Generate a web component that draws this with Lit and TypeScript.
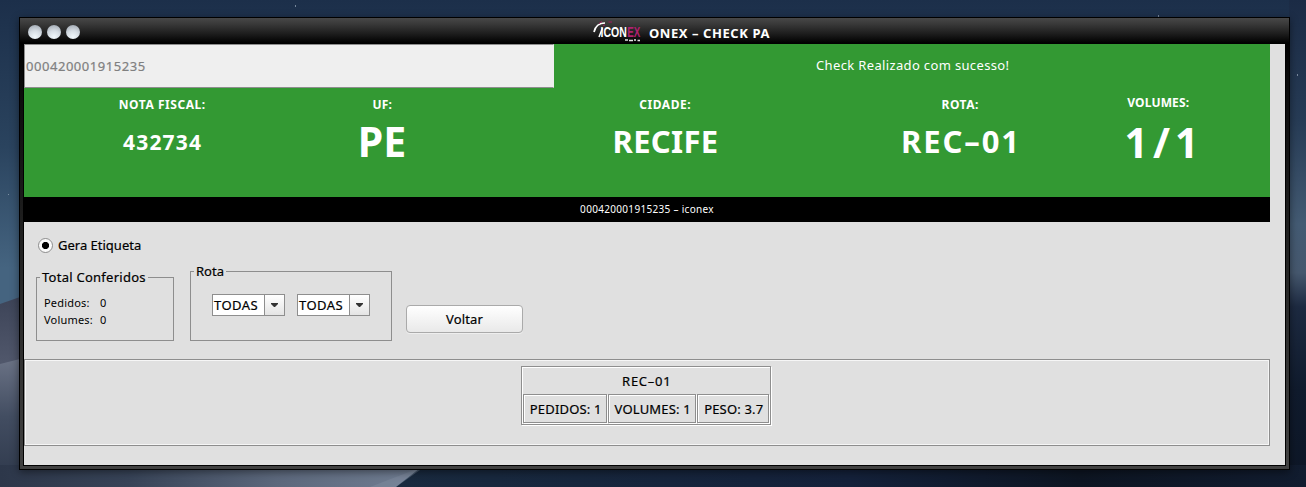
import { LitElement, html, css } from "lit";
import { customElement, property } from "lit/decorators.js";

@customElement("route-combo")
class RouteCombo extends LitElement {
  @property() value = "";
  static styles = css`
    :host { display: flex; box-sizing: border-box; width: 73px; height: 22px; border: 1px solid #8e8e8e; background: #fff; }
    .value { flex: 1; padding-left: 1px; font: 13px/21px "Noto Sans", sans-serif; letter-spacing: .45px; color: #000; -webkit-text-stroke: .2px #000; }
    .arrow { width: 19px; border-left: 1px solid #8e8e8e; background: linear-gradient(#fff, #e4e4e4); display: flex; align-items: center; justify-content: center; }
    svg { display: block; }
  `;
  render() {
    return html`<div class="value">${this.value}</div>
      <div class="arrow"><svg width="7" height="4"><path d="M0 0H7V1L4 4H3L0 1Z" fill="#333" /></svg></div>`;
  }
}

@customElement("status-field")
class StatusField extends LitElement {
  @property() label = "";
  @property() value = "";
  @property() size = "medium";
  static styles = css`
    :host { display: block; text-align: center; color: #fff; font-family: "Noto Sans", sans-serif; font-weight: 700; white-space: nowrap; }
    .label { font-size: 12px; line-height: 16px; letter-spacing: var(--label-spacing, .55px); text-indent: .5px; }
    .value { height: 44px; line-height: 44px; margin-top: var(--value-gap, 6px); letter-spacing: var(--value-spacing, 0); text-indent: var(--value-indent, var(--value-spacing, 0)); }
    .small { font-size: 21px; }
    .medium { font-size: 31px; }
    .large { font-size: 41px; }
  `;
  render() {
    return html`<div class="label">${this.label}</div><div class="value ${this.size}">${this.value}</div>`;
  }
}

@customElement("app-root")
class AppRoot extends LitElement {
  static styles = css`
    :host { display: block; width: 1306px; height: 487px; overflow: hidden; font: 13px/18px "Noto Sans", sans-serif; color: #000; }
    * { box-sizing: border-box; }
    .desktop { position: relative; width: 1306px; height: 487px; padding: 17px 16px 17px 19px; }
    .wallpaper { position: absolute; inset: 0; display: block; }
    .window { position: relative; width: 1271px; height: 453px; border: 1px solid #000; background: linear-gradient(#000 26px, #0a0a0a 60px, #404040 440px); box-shadow: 0 2px 8px rgba(0,0,0,.45); }
    .titlebar { height: 26px; display: flex; align-items: center; background: linear-gradient(#484848, #3b3b3b 20%, #1c1c1c 62%, #000 96%); }
    .lights { display: flex; gap: 5px; padding: 1px 0 0 8px; width: 573px; }
    .light { width: 14px; height: 14px; border-radius: 50%; background: radial-gradient(circle at 50% 85%, #f1f8fc 0, #d5dce3 45%, #b3bbc4 75%, #89919a 100%); }
    .title { color: #fff; font-weight: 700; font-size: 13px; padding: 3px 0 0 7px; white-space: nowrap; letter-spacing: .57px; }
    .frame { margin: 0 3px; border: solid #000; border-width: 0 1px 1px; height: 422px; background: #e0e0e0; }
    .page { width: 1246px; }
    .status { height: 153px; background: #339933; }
    .top { display: flex; height: 44px; }
    .code { width: 530px; height: 44px; border: 1px solid #8e8e8e; border-right-color: #efefef; background: #efefef; color: #808080; padding-left: 1px; line-height: 43px; font-size: 13px; letter-spacing: .54px; -webkit-text-stroke: .2px #808080; }
    .message { flex: 1; text-align: center; color: #fff; line-height: 43px; letter-spacing: .35px; text-indent: 1.4px; }
    .fields { display: grid; grid-template-columns: 276px 164px 402px 188px 208px; padding-top: 9px; }
    .invoice { --value-spacing: 1.15px; --value-gap: 7px; }
    .state { --label-spacing: .1px; }
    .city { --value-spacing: .3px; --value-indent: 1px; }
    .line { --value-spacing: 1.9px; }
    .volumes { margin-top: -2px; --label-spacing: .15px; --value-spacing: 5px; --value-indent: 12px; --value-gap: 9px; }
    .log { height: 25px; background: #000; color: #fff; font-size: 10px; line-height: 25px; text-align: center; letter-spacing: .31px; }
    .option { display: flex; align-items: center; gap: 5px; padding: 14px 0 0 14px; height: 32px; -webkit-text-stroke: .2px #000; }
    .radio { width: 15px; height: 15px; border: 1px solid #8e8e8e; border-radius: 50%; background: radial-gradient(circle, #000 0 3.2px, #fafafa 4px); }
    .controls { display: flex; align-items: flex-start; padding-left: 12px; height: 105px; -webkit-text-stroke: .2px #000; }
    fieldset { margin: 0; padding: 0; border: 1px solid #8e8e8e; min-width: 0; }
    legend { margin-left: 3px; padding: 0 2px; line-height: 18px; white-space: nowrap; }
    .totals { width: 138px; height: 73px; margin: 14px 16px 0 0; }
    .totals legend { letter-spacing: .26px; }
    .total { display: grid; grid-template-columns: 56px 1fr; padding-left: 7px; font-size: 11px; line-height: 17px; letter-spacing: .2px; -webkit-text-stroke: 0; }
    .total:first-of-type { margin-top: 8px; }
    .route { width: 202px; height: 79px; margin: 8px 14px 0 0; }
    .combos { display: flex; gap: 12px; padding: 14px 0 0 21px; }
    button { width: 117px; height: 28px; margin-top: 51px; padding: 0; border: 1px solid #aaa; border-radius: 4px; background: linear-gradient(#fff, #e9e9e9); font: inherit; color: #000; letter-spacing: .15px; box-shadow: 0 1px #eee; }
    .results { height: 87px; border: 1px solid #8e8e8e; box-shadow: inset 0 0 0 1px #f6f6f6; padding: 6px 2px 0 0; -webkit-text-stroke: .2px #000; }
    .card { width: 250px; height: 59px; margin: 0 auto; border: 1px solid #8e8e8e; box-shadow: inset 1px 1px #fff, 1px 1px #fff; padding: 1px; text-align: center; }
    .route-name { height: 26px; line-height: 27px; letter-spacing: .75px; text-indent: 1.5px; }
    .cells { display: grid; grid-template-columns: 84px 88px 72px; gap: 1px; }
    .cell { height: 29px; border: 1px solid #8e8e8e; box-shadow: inset 1px 1px #fff, 1px 1px #fff; line-height: 28px; white-space: nowrap; letter-spacing: .18px; text-indent: 1.5px; }
  `;
  render() {
    return html`<div class="desktop">
      ${this.wallpaper()}
      <div class="window">
        <div class="titlebar">
          <div class="lights"><i class="light"></i><i class="light"></i><i class="light"></i></div>
          ${this.logo()}
          <div class="title">ONEX – CHECK PA</div>
        </div>
        <div class="frame"><div class="page">
          <div class="status">
            <div class="top"><div class="code">000420001915235</div><div class="message">Check Realizado com sucesso!</div></div>
            <div class="fields">
              <status-field class="invoice" label="NOTA FISCAL:" value="432734" size="small"></status-field>
              <status-field class="state" label="UF:" value="PE" size="large"></status-field>
              <status-field class="city" label="CIDADE:" value="RECIFE"></status-field>
              <status-field class="line" label="ROTA:" value="REC–01"></status-field>
              <status-field class="volumes" label="VOLUMES:" value="1/1" size="large"></status-field>
            </div>
          </div>
          <div class="log">000420001915235 – iconex</div>
          <div class="option"><i class="radio"></i><span>Gera Etiqueta</span></div>
          <div class="controls">
            <fieldset class="totals"><legend>Total Conferidos</legend>
              <div class="total"><span>Pedidos:</span><span>0</span></div>
              <div class="total"><span>Volumes:</span><span>0</span></div>
            </fieldset>
            <fieldset class="route"><legend>Rota</legend>
              <div class="combos"><route-combo value="TODAS"></route-combo><route-combo value="TODAS"></route-combo></div>
            </fieldset>
            <button>Voltar</button>
          </div>
          <div class="results"><div class="card">
            <div class="route-name">REC–01</div>
            <div class="cells"><div class="cell">PEDIDOS: 1</div><div class="cell">VOLUMES: 1</div><div class="cell">PESO: 3.7</div></div>
          </div></div>
        </div></div>
      </div>
    </div>`;
  }
  logo() {
    return html`<svg width="49" height="22" viewBox="0 0 49 22" fill="none" font-family="Liberation Sans, sans-serif" font-weight="700" font-size="10.5">
      <path d="M1 12Q3 3 12 3" stroke="#fff" stroke-width="1.7"/>
      <path d="M6 3.5L9 1.5M15.5 2H19M10 5.5L12 5" stroke="#a3195f"/>
      <path d="M6 17L9.5 8" stroke="#fff" stroke-width="1.5"/>
      <text transform="translate(7.5 17) scale(1 1.35)" fill="#fff">ICON</text>
      <text transform="translate(34.2 17) scale(.93 1.35)" fill="#b0216f">EX</text>
      <path d="M32 20H35M36 20.5H40M41 20H43M44.5 20.5H47" stroke="#fff" stroke-width="1.5" opacity=".9"/></svg>`;
  }
  wallpaper() {
    return html`<svg class="wallpaper" width="1306" height="487">
      <defs>
        <linearGradient id="sky" x2="0" y2="1"><stop stop-color="#1c2f4a"/><stop offset=".3" stop-color="#2a435e"/><stop offset=".55" stop-color="#456480"/></linearGradient>
        <linearGradient id="east" x2="0" y2="1"><stop stop-color="#1b2b45"/><stop offset=".25" stop-color="#273c56"/><stop offset=".46" stop-color="#445b73"/><stop offset=".56" stop-color="#46586e"/><stop offset=".63" stop-color="#1d2a41"/><stop offset=".8" stop-color="#101b2d"/><stop offset="1" stop-color="#0d1626"/></linearGradient>
        <linearGradient id="far" x2="0" y2="1"><stop stop-color="#3d4458"/><stop offset="1" stop-color="#555c70"/></linearGradient>
        <linearGradient id="near" x2="0" y2="1"><stop stop-color="#6a7285"/><stop offset=".45" stop-color="#424d61"/><stop offset="1" stop-color="#2d374a"/></linearGradient>
        <linearGradient id="dune"><stop stop-color="#2d374a"/><stop offset=".3" stop-color="#374357"/><stop offset=".65" stop-color="#5c687c"/><stop offset="1" stop-color="#717e93"/></linearGradient>
        <linearGradient id="shade"><stop stop-color="#192a3f"/><stop offset=".5" stop-color="#14213a"/><stop offset=".75" stop-color="#0d1522"/><stop offset="1" stop-color="#111c2f"/></linearGradient>
      </defs>
      <rect width="1306" height="487" fill="url(#sky)"/>
      <rect x="1289" width="17" height="487" fill="url(#east)"/>
      <path d="M0 304L20 297V380H0Z" fill="url(#far)"/>
      <path d="M0 364L20 359V487H0Z" fill="url(#near)"/>
      <path d="M0 465H424L396 487H0Z" fill="url(#dune)"/>
      <path d="M424 465H1306V487H396Z" fill="url(#shade)"/>
      <path d="M370 487L414 470H420L396 487Z" fill="#8590a3" opacity=".4"/>
      <g fill="#9dacbd" opacity=".7"><rect x="295" y="5" width="1" height="2"/><rect x="1158" y="15" width="1" height="2"/><rect x="1297" y="74" width="1" height="2"/><rect x="8" y="194" width="1" height="1"/></g>
    </svg>`;
  }
}
